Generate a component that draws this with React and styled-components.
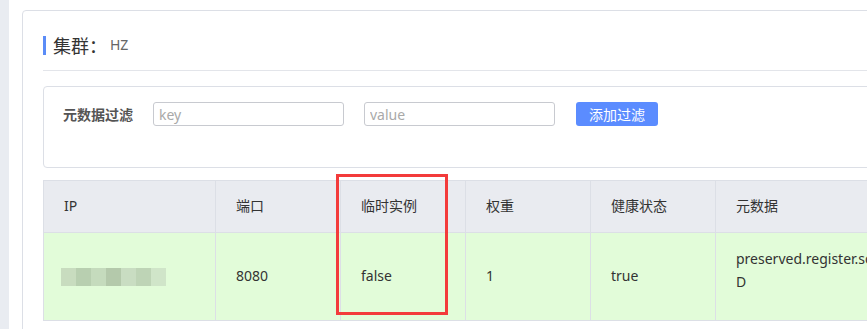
import React from "react";
import styled, { createGlobalStyle } from "styled-components";

const Global = createGlobalStyle`
  html, body { margin: 0; padding: 0; background: #fff; overflow: hidden; }
  body { font-family: "Noto Sans", "Noto Sans CJK SC", sans-serif; color: #333; }
  * { box-sizing: border-box; }
`;

const Shell = styled.div`
  display: flex;
  width: 867px;
  height: 329px;
  overflow: hidden;
`;

const Rail = styled.div`
  flex: 0 0 9px;
  background: #e9ecf1;
`;

const Main = styled.div`
  flex: 1;
  padding: 10px 0 0 13px;
  overflow: hidden;
`;

const Card = styled.section`
  width: 960px;
  min-height: 340px;
  border: 1px solid #dcdfe6;
  border-radius: 4px;
  padding: 24px 0 0 20px;
`;

const TitleRow = styled.div`
  display: flex;
  align-items: center;
  height: 20px;
`;

const TitleBar = styled.span`
  width: 3px;
  height: 19px;
  background: #5b8cf7;
  margin-right: 7px;
`;

const TitleText = styled.span`
  font-family: "Noto Sans CJK SC", sans-serif;
  font-size: 18px;
  font-weight: 400;
  color: #333;
  line-height: 20px;
`;

const TitleValue = styled.span`
  font-size: 14px;
  color: #666;
  margin-left: 3px;
  line-height: 20px;
`;

const Divider = styled.div`
  height: 1px;
  background: #e3e5ea;
  margin: 15px 0 15px;
`;

const FilterBox = styled.div`
  display: flex;
  align-items: flex-start;
  height: 82px;
  border: 1px solid #dcdfe6;
  border-radius: 4px;
  padding: 15px 0 0 19px;
  gap: 20px;
`;

const FilterLabel = styled.label`
  font-family: "Noto Sans CJK SC", sans-serif;
  font-size: 14px;
  font-weight: 700;
  color: #555;
  line-height: 24px;
`;

const TextInput = styled.input`
  width: ${(p) => p.$w}px;
  height: 24px;
  border: 1px solid #c8cad0;
  border-radius: 3px;
  padding: 0 5px;
  font-family: "Noto Sans", sans-serif;
  font-size: 14px;
  color: #333;
  outline: none;
  &::placeholder { color: #a9a9a9; }
`;

const Button = styled.button`
  height: 24px;
  width: 82px;
  margin-left: 1px;
  border: none;
  border-radius: 3px;
  background: #5b8cff;
  color: #fff;
  font-family: "Noto Sans CJK SC", sans-serif;
  font-size: 14px;
  padding: 0;
  cursor: pointer;
`;

const TableWrap = styled.div`
  position: relative;
  margin-top: 12px;
`;

const Table = styled.table`
  border-collapse: collapse;
  table-layout: fixed;
  width: 972px;
  font-size: 14px;
`;

const Th = styled.th`
  width: ${(p) => p.$w}px;
  height: 52px;
  background: #e9ebf0;
  border: 1px solid #dcdfe6;
  text-align: left;
  font-weight: 400;
  padding: 0 20px 3px;
  font-family: "Noto Sans", "Noto Sans CJK SC", sans-serif;
  color: #333;
`;

const Row = styled.tr`
  background: #e2fcd9;
`;

const Td = styled.td`
  height: 88px;
  border: 1px solid #dcdfe6;
  padding: 0 20px 3px;
  color: #333;
  vertical-align: middle;
  word-break: break-all;
  line-height: 23px;
`;

const Masked = styled.div`
  display: flex;
  height: 18px;
  margin: 0 0 -3px -3px;
`;

const MaskBlock = styled.span`
  width: 15px;
  height: 18px;
  background: ${(p) => p.$c};
`;

const Meta = styled.div`
  width: 268px;
  margin-top: -10px;
`;

const Highlight = styled.div`
  position: absolute;
  left: 293px;
  top: -6px;
  width: 112px;
  height: 141px;
  border: 3px solid #f33b3b;
  pointer-events: none;
`;

const maskColors = ["#c8dcbf", "#b8cfb0", "#c5dbbd", "#b4c9ab", "#c9ddc2", "#bed4b6", "#d0e5c9"];

const columns = [
  { key: "ip", title: "IP", w: 172 },
  { key: "port", title: "端口", w: 125 },
  { key: "ephemeral", title: "临时实例", w: 125 },
  { key: "weight", title: "权重", w: 125 },
  { key: "healthy", title: "健康状态", w: 125 },
  { key: "meta", title: "元数据", w: 300 },
];

export default function App() {
  return (
    <>
      <Global />
      <Shell>
        <Rail />
        <Main>
          <Card>
            <TitleRow>
              <TitleBar />
              <TitleText>集群：</TitleText>
              <TitleValue>HZ</TitleValue>
            </TitleRow>
            <Divider />
            <FilterBox>
              <FilterLabel>元数据过滤</FilterLabel>
              <TextInput $w={191} placeholder="key" />
              <TextInput $w={191} placeholder="value" />
              <Button>添加过滤</Button>
            </FilterBox>
            <TableWrap>
              <Table>
                <thead>
                  <tr>
                    {columns.map((c) => (
                      <Th key={c.key} $w={c.w}>{c.title}</Th>
                    ))}
                  </tr>
                </thead>
                <tbody>
                  <Row>
                    <Td>
                      <Masked>
                        {maskColors.map((c, i) => (
                          <MaskBlock key={i} $c={c} />
                        ))}
                      </Masked>
                    </Td>
                    <Td>8080</Td>
                    <Td>false</Td>
                    <Td>1</Td>
                    <Td>true</Td>
                    <Td>
                      <Meta>preserved.register.source=SPRING_CLOUD</Meta>
                    </Td>
                  </Row>
                </tbody>
              </Table>
              <Highlight />
            </TableWrap>
          </Card>
        </Main>
      </Shell>
    </>
  );
}
